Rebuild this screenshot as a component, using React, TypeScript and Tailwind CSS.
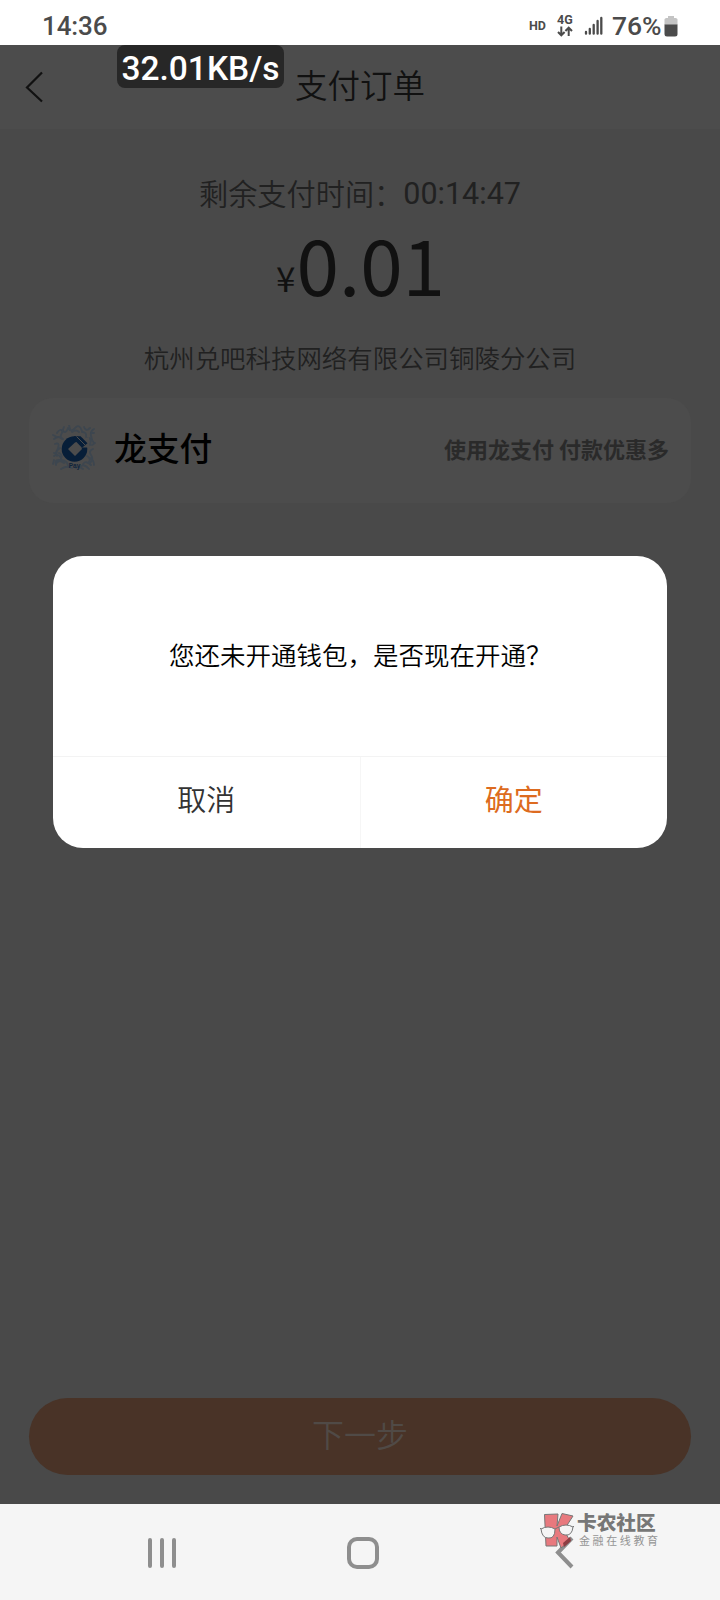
import React from "react";

const cjk = "font-['Noto_Sans_CJK_SC',sans-serif]";
const roboto = "font-[Roboto,sans-serif]";

function StatusBar() {
  return (
    <div className={`flex h-[45px] shrink-0 items-center bg-white pl-[42px] text-[#4b4b4b] ${roboto}`}>
      <span className="mt-[6px] w-[487px] text-[26px] leading-[30px] font-medium tracking-[-0.1px]">14:36</span>
      <span className="mt-[6px] w-[28px] text-[12.5px] leading-4 font-bold">HD</span>
      <div className="mt-[6px] flex w-[27px] flex-col">
        <span className="text-[12.5px] leading-[12px] font-bold">4G</span>
        <svg width="16" height="11" viewBox="0 0 16 11" fill="none" stroke="#4b4b4b" strokeWidth="2">
          <path d="M4.3 0.5V9M1 6l3.3 3.3L7.6 6M11.7 10V2M8.4 5l3.3-3.3L15 5" />
        </svg>
      </div>
      <svg className="mt-[7px]" width="19" height="20" viewBox="0 0 19 20" stroke="#4b4b4b" strokeWidth="2.3" strokeLinecap="round">
        <path d="M2 16v1.7M5.8 13v4.7M9.7 9v8.7M13.6 5v12.7M17.3 2v15.7" />
      </svg>
      <span className="mt-[6px] ml-[9px] w-[52px] text-[26.5px] leading-[30px] font-medium">76%</span>
      <svg className="mt-[7px]" width="14" height="21" viewBox="0 0 14 21">
        <path d="M4 0h6v2h1.5A2 2 0 0 1 13.500 4.500V9H.5V4.500A2 2 0 0 1 2.500 2H4z" fill="#c4c4c4" />
        <path d="M.5 8.500h13V18a2.500 2.500 0 0 1-2.500 2.500H3A2.500 2.500 0 0 1 .5 18z" fill="#4b4b4b" />
      </svg>
    </div>
  );
}

function LongPayLogo() {
  return (
    <svg className="-mt-[5px]" width="44" height="46" viewBox="0 0 44 46">
      <g fill="none" stroke="#3d464f" strokeWidth="1.8" strokeLinecap="round">
        <path d="M5 8q3-5 6-2t5-3M2 14q5-4 8 0M3 19q5-2 3 4t-4 5M8 23q-5 3-3 8M2 31q4-3 7 2M4 40q-2-6 5-5t7 6M9 44q6-4 11-1M16 3q3 5 7 0t7 3M20 7q4-3 7 0M32 2q2 5 6 1M30 7q5 0 4 5M42 4q-4 2-3 7t3 7M36 13q4 0 2 7M41 24q-5 2-2 6t-1 8M35 31q5 3 1 7M28 42q4-4 9 2M31 39q3-4 8 1M10 8q-3 4 1 6M7 28q4 2 2 6M38 33q4 2 4 7M24 43q3-2 7 1M12 38q-6-4-8 1" />
        <path d="M1 10l4 2M12 2l-2 5M40 20l3-2M2 35l-1 4M39 8h3M17 0l1 4" />
      </g>
      <circle cx="22.500" cy="24" r="12.800" fill="#071e38" />
      <path d="M23 17.500L37 12V22.500H29.500L30 24l-7 7-7-7z" fill="#4c4c4c" />
      <path d="M22 11.300h6.500l7 7-5.500 4.500L21.500 14z" fill="#071e38" />
      <path d="M24.500 11.500l9 9" stroke="#4c4c4c" strokeWidth="1" />
      <text x="22.500" y="43" textAnchor="middle" fontFamily="Liberation Sans, sans-serif" fontSize="6.500" fontWeight="700" fill="#10243b">Pay</text>
    </svg>
  );
}

function Dialog() {
  return (
    <div className={`absolute top-[556px] left-[53px] flex h-[292px] w-[614px] flex-col overflow-hidden rounded-[30px] bg-white ${cjk}`}>
      <div className="h-[200px] pt-[78px] pl-[116px] text-[25.5px] leading-10 font-[350] whitespace-nowrap text-black">
        您还未开通钱包，是否现在开通？
      </div>
      <div className="flex flex-1 border-t border-[#f3f3f3] text-[29px]">
        <button className="flex-1 border-r border-[#f6f6f6] pb-[7px] font-[350] text-[#333]">取消</button>
        <button className="flex-1 pb-[7px] text-[#dd6b20]">确定</button>
      </div>
    </div>
  );
}

function Watermark() {
  return (
    <div className="absolute top-[1510px] left-[539px] flex font-['Liberation_Sans','Noto_Sans_CJK_SC',sans-serif]">
      <svg width="36" height="38" viewBox="0 0 36 38">
        <g stroke="#777" strokeWidth="1" strokeLinejoin="round">
          <path d="M5.500 4.500L19 4l-1 12 5-12.500L34 6 25 20l6 11-9 7-4-11v9H7z" fill="#e8797e" />
          <path d="M24 33l7-6 1 4-7 6z" fill="#8d3e43" stroke="none" />
          <path d="M2 19q7-4 14 0 0 10-7 9-6 0-7-9zM20 17q7-4 14 0-1 9-8 8-6-1-6-8zM16 19l4-2M2 19l-1-1M34 17l1-1" fill="#f5f5f5" />
        </g>
      </svg>
      <div className="ml-[2px] flex flex-col text-[#777]">
        <span className="text-[19.7px] leading-[26px] font-black whitespace-nowrap">卡农社区</span>
        <span className="pl-[2px] text-[11px] leading-[11px] tracking-[2.6px] whitespace-nowrap text-[#949494]">金融在线教育</span>
      </div>
    </div>
  );
}

export default function App() {
  return (
    <div className="relative flex h-[1600px] w-[720px] flex-col overflow-hidden bg-[#494949]">
      <StatusBar />
      <header className={`flex h-[84px] shrink-0 items-center bg-[#4c4c4c] pl-[24px] text-[#111] ${cjk}`}>
        <svg width="20" height="32" viewBox="0 0 20 32" fill="none" stroke="#111" strokeWidth="2.2">
          <path d="M18 1.500L3 16.500l15 14" />
        </svg>
        <h1 className="-mt-[7px] ml-[251px] text-[32.5px] leading-10 font-[350]">支付订单</h1>
      </header>
      <div className={`absolute top-[45px] left-[117px] h-[43px] w-[167px] rounded-[8px] bg-[#272727] text-center text-[33.5px] leading-[48px] font-medium whitespace-nowrap text-white ${roboto}`}>
        32.01KB/s
      </div>

      <main className={`flex flex-1 flex-col px-[29px] ${cjk}`}>
        <p className="mt-[42px] flex h-[42px] items-center pl-[170px] text-[29.2px] leading-[42px] font-[350] text-[#212121]">
          剩余支付时间：
          <span className={`mt-[4px] text-[30.5px] font-normal ${roboto}`}>00:14:47</span>
        </p>
        <p className="flex h-[100px] items-baseline pl-[247px] leading-[99px] text-[#111]">
          <span className="-translate-y-[4px] text-[35px]">¥</span>
          <span className="ml-[1px] text-[76.5px]">0.01</span>
        </p>
        <p className="mt-[24px] h-[40px] text-center text-[25.45px] leading-[40px] font-[350] text-[#212121]">
          杭州兑吧科技网络有限公司铜陵分公司
        </p>
        <section className="mt-[21px] flex h-[105px] items-center rounded-[24px] bg-[#4c4c4c] pr-[22px] pl-[23px]">
          <LongPayLogo />
          <span className="-mt-[8px] ml-[18px] text-[32.8px] font-medium text-black">龙支付</span>
          <span className="-mt-[5px] ml-auto text-[22px] font-bold text-[#2a2a2a]">使用龙支付 付款优惠多</span>
        </section>
        <button className="mt-auto mb-[29px] h-[77px] rounded-full bg-[#493327] pb-[7px] text-[32px] font-[350] text-[#504a46]">下一步</button>
      </main>

      <nav className="flex h-[96px] shrink-0 items-center bg-[#f5f5f5]">
        <svg width="720" height="96" viewBox="0 0 720 96" fill="none" stroke="#8e8e8e" strokeWidth="4">
          <path d="M150 36v26M162 36v26M174 36v26" strokeLinecap="round" />
          <rect x="349" y="35" width="28" height="28" rx="8" />
          <path d="M572 34L558 48.500l14 14.500" />
        </svg>
      </nav>
      <Dialog />
      <Watermark />
    </div>
  );
}
